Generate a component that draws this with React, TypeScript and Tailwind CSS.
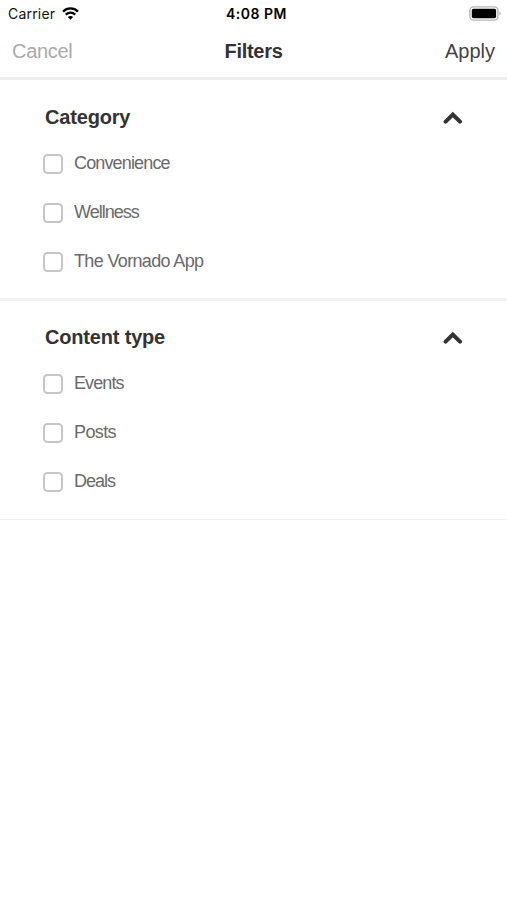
import React from "react";

function StatusBar() {
  return (
    <div className="grid h-[27px] grid-cols-3 items-center pl-2 pr-[6px] font-['Inter',sans-serif] text-[14px] leading-none text-[#111]">
      <div className="flex items-center gap-[7px]">
        <span className="tracking-[0.2px]">Carrier</span>
        <svg width="17" height="13" viewBox="0 0 17 13" fill="none" stroke="#000" strokeWidth="2.3">
          <path d="M1 4.6C5.2.4 11.8.4 16 4.6" />
          <path d="M3.8 7.6c2.7-2.6 6.7-2.6 9.4 0" />
          <path d="M8.5 12.7 5.9 10c1.5-1.5 3.7-1.5 5.2 0Z" fill="#000" stroke="none" />
        </svg>
      </div>
      <span className="whitespace-nowrap pl-[4px] text-center font-semibold tracking-[0.5px] text-black">4:08 PM</span>
      <svg className="justify-self-end" width="32" height="15" viewBox="0 0 32 15">
        <rect x="0.9" y="0.9" width="28" height="13.2" rx="3.6" fill="#fff" stroke="#b5b5b5" strokeWidth="1.4" />
        <rect x="2.8" y="2.8" width="24.3" height="9.4" rx="1.7" fill="#000" />
        <path d="M30.5 5.5c1.4.7 1.4 3.3 0 4Z" fill="#999" />
      </svg>
    </div>
  );
}

function Option({ label, tracking }: { label: string; tracking: string }) {
  return (
    <label className="flex h-[49px] items-center">
      <span className="mt-px h-5 w-5 rounded-[4.5px] border-2 border-[#c6c6c6] bg-white" />
      <span className={`-mt-px ml-[11px] text-[18px] leading-5 text-[#6a6a6a] ${tracking}`}>{label}</span>
    </label>
  );
}

function Section({ title, options, spacing }: { title: string; options: [string, string][]; spacing: string }) {
  return (
    <section className={`pl-[43px] pr-11 ${spacing}`}>
      <div className="flex h-[58px] items-center justify-between pl-[2px] pt-[13px]">
        <h2 className="text-[20px] font-bold leading-6 tracking-[-0.18px] text-[#333]">{title}</h2>
        <svg className="mt-[3px]" width="20" height="14" viewBox="0 0 20 14" fill="none" stroke="#333" strokeWidth="4" strokeLinecap="round" strokeLinejoin="miter">
          <path d="m2.6 10.7 7.2-7.2 7.2 7.2" />
        </svg>
      </div>
      {options.map(([label, tracking]) => (
        <Option key={label} label={label} tracking={tracking} />
      ))}
    </section>
  );
}

export default function App() {
  return (
    <main className="min-h-[900px] w-full bg-white font-['Liberation_Sans',Arial,sans-serif]">
      <StatusBar />
      <header className="grid h-[53px] grid-cols-3 items-center border-b-[3px] border-[#eee] px-3 pb-[3px] text-[20px] leading-6">
        <button className="text-left tracking-[-0.3px] text-[#aaa]">Cancel</button>
        <h1 className="text-center text-[20px] font-bold tracking-[-0.3px] text-[#333]">Filters</h1>
        <button className="text-right text-[#444]">Apply</button>
      </header>
      <Section
        title="Category"
        spacing="border-b-[3px] border-[#f3f3f3] pb-3 pt-px"
        options={[
          ["Convenience", "tracking-[-0.85px]"],
          ["Wellness", "tracking-[-1px]"],
          ["The Vornado App", "tracking-[-0.65px]"],
        ]}
      />
      <Section
        title="Content type"
        spacing="border-b border-[#eee] pb-[13px]"
        options={[
          ["Events", "tracking-[-0.9px]"],
          ["Posts", "tracking-[-0.6px]"],
          ["Deals", "tracking-[-1px]"],
        ]}
      />
    </main>
  );
}
